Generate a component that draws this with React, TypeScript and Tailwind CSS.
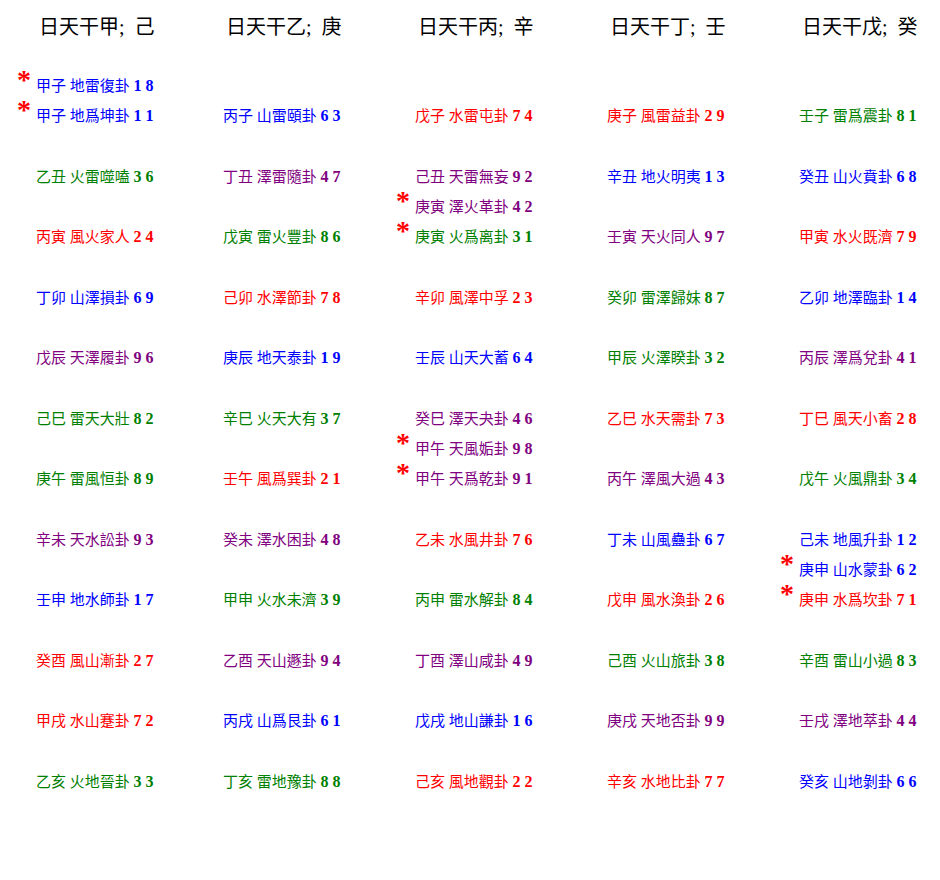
import React from "react";

type Tone = "b" | "g" | "p" | "r";

interface Entry {
  text: string;
  num: string;
  tone: Tone;
  star?: boolean;
}

const toneClass: Record<Tone, string> = {
  b: "text-[#0000ff]",
  g: "text-[#008000]",
  p: "text-[#800080]",
  r: "text-[#ff0000]",
};

const e = (text: string, num: string, tone: Tone, star = false): Entry => ({ text, num, tone, star });

const headers = ["日天干甲; 己", "日天干乙; 庚", "日天干丙; 辛", "日天干丁; 壬", "日天干戊; 癸"];

// each column: 12 slots, a slot may hold more than one entry
const columns: Entry[][][] = [
  [
    [e("甲子 地雷復卦", "1 8", "b", true), e("甲子 地爲坤卦", "1 1", "b", true)],
    [e("乙丑 火雷噬嗑", "3 6", "g")],
    [e("丙寅 風火家人", "2 4", "r")],
    [e("丁卯 山澤損卦", "6 9", "b")],
    [e("戊辰 天澤履卦", "9 6", "p")],
    [e("己巳 雷天大壯", "8 2", "g")],
    [e("庚午 雷風恒卦", "8 9", "g")],
    [e("辛未 天水訟卦", "9 3", "p")],
    [e("壬申 地水師卦", "1 7", "b")],
    [e("癸酉 風山漸卦", "2 7", "r")],
    [e("甲戌 水山蹇卦", "7 2", "r")],
    [e("乙亥 火地晉卦", "3 3", "g")],
  ],
  [
    [e("丙子 山雷頤卦", "6 3", "b")],
    [e("丁丑 澤雷隨卦", "4 7", "p")],
    [e("戊寅 雷火豐卦", "8 6", "g")],
    [e("己卯 水澤節卦", "7 8", "r")],
    [e("庚辰 地天泰卦", "1 9", "b")],
    [e("辛巳 火天大有", "3 7", "g")],
    [e("壬午 風爲巽卦", "2 1", "r")],
    [e("癸未 澤水困卦", "4 8", "p")],
    [e("甲申 火水未濟", "3 9", "g")],
    [e("乙酉 天山遯卦", "9 4", "p")],
    [e("丙戌 山爲艮卦", "6 1", "b")],
    [e("丁亥 雷地豫卦", "8 8", "g")],
  ],
  [
    [e("戊子 水雷屯卦", "7 4", "r")],
    [e("己丑 天雷無妄", "9 2", "p")],
    [e("庚寅 澤火革卦", "4 2", "p", true), e("庚寅 火爲离卦", "3 1", "g", true)],
    [e("辛卯 風澤中孚", "2 3", "r")],
    [e("壬辰 山天大蓄", "6 4", "b")],
    [e("癸巳 澤天夬卦", "4 6", "p")],
    [e("甲午 天風姤卦", "9 8", "p", true), e("甲午 天爲乾卦", "9 1", "p", true)],
    [e("乙未 水風井卦", "7 6", "r")],
    [e("丙申 雷水解卦", "8 4", "g")],
    [e("丁酉 澤山咸卦", "4 9", "p")],
    [e("戊戌 地山謙卦", "1 6", "b")],
    [e("己亥 風地觀卦", "2 2", "r")],
  ],
  [
    [e("庚子 風雷益卦", "2 9", "r")],
    [e("辛丑 地火明夷", "1 3", "b")],
    [e("壬寅 天火同人", "9 7", "p")],
    [e("癸卯 雷澤歸妹", "8 7", "g")],
    [e("甲辰 火澤睽卦", "3 2", "g")],
    [e("乙巳 水天需卦", "7 3", "r")],
    [e("丙午 澤風大過", "4 3", "p")],
    [e("丁未 山風蠱卦", "6 7", "b")],
    [e("戊申 風水渙卦", "2 6", "r")],
    [e("己酉 火山旅卦", "3 8", "g")],
    [e("庚戌 天地否卦", "9 9", "p")],
    [e("辛亥 水地比卦", "7 7", "r")],
  ],
  [
    [e("壬子 雷爲震卦", "8 1", "g")],
    [e("癸丑 山火賁卦", "6 8", "b")],
    [e("甲寅 水火既濟", "7 9", "r")],
    [e("乙卯 地澤臨卦", "1 4", "b")],
    [e("丙辰 澤爲兌卦", "4 1", "p")],
    [e("丁巳 風天小畜", "2 8", "r")],
    [e("戊午 火風鼎卦", "3 4", "g")],
    [e("己未 地風升卦", "1 2", "b")],
    [e("庚申 山水蒙卦", "6 2", "b", true), e("庚申 水爲坎卦", "7 1", "r", true)],
    [e("辛酉 雷山小過", "8 3", "g")],
    [e("壬戌 澤地萃卦", "4 4", "p")],
    [e("癸亥 山地剝卦", "6 6", "b")],
  ],
];

function Line({ entry }: { entry: Entry }) {
  return (
    <div className={`relative h-[30px] whitespace-nowrap text-[15px] leading-[30px] ${toneClass[entry.tone]}`}>
      {entry.star && (
        <span className="absolute right-full top-[-6px] mr-[5px] text-[28px] font-bold leading-[30px] text-[#ff0000]">
          *
        </span>
      )}
      <span>{entry.text} </span>
      <span className="text-[16px] font-bold">{entry.num}</span>
    </div>
  );
}

export default function App() {
  const rows = Array.from({ length: 12 }, (_, r) => r);

  return (
    <div className="h-[880px] w-[940px] bg-white pl-[36px] font-['Liberation_Serif','Noto_Sans_CJK_TC',serif] text-black">
      <div className="grid h-[54px] grid-cols-[187px_192px_192px_192px_141px] items-center">
        {headers.map((h) => (
          <div key={h} className="whitespace-nowrap pl-[3px] text-[20px] [word-spacing:5px]">
            {h}
          </div>
        ))}
      </div>

      <div className="mt-[16.5px] grid auto-rows-[60.5px] grid-cols-[187px_192px_192px_192px_141px]">
        {rows.map((r) =>
          columns.map((col, c) => (
            <div key={`${r}-${c}`} className="flex flex-col justify-end">
              {col[r].map((entry, i) => (
                <Line key={i} entry={entry} />
              ))}
            </div>
          ))
        )}
      </div>
    </div>
  );
}
